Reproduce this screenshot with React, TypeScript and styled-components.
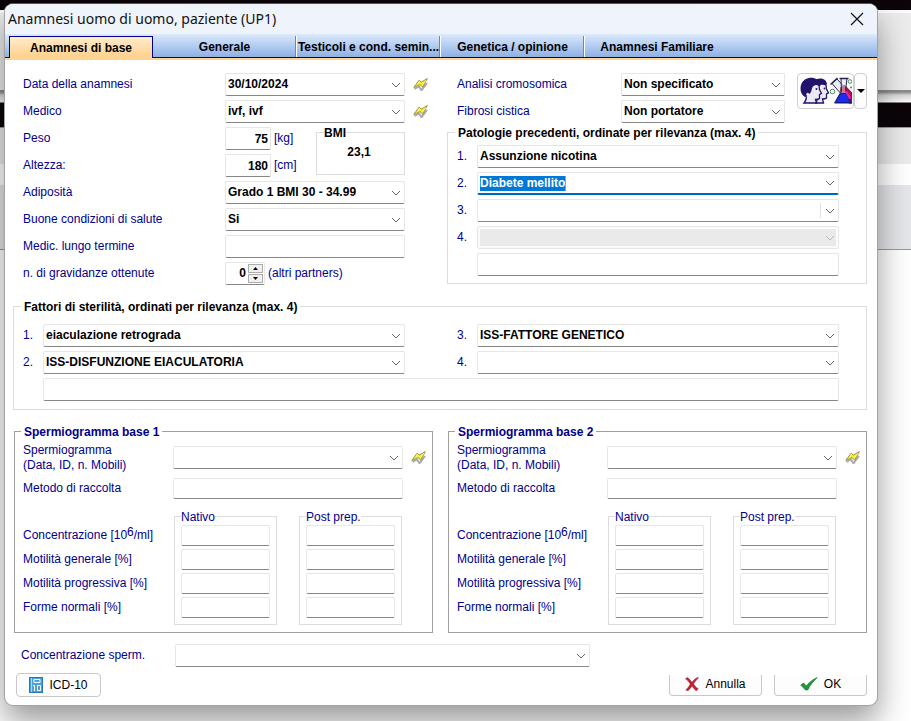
import React, { useId, useState } from "react";
import styled, { createGlobalStyle, css } from "styled-components";

const NAVY = "#00008b";

const GlobalStyle = createGlobalStyle`
  *, *::before, *::after { box-sizing: border-box; }
  body {
    margin: 0;
    background: #fff;
    font: 12px/15px "Liberation Sans", Arial, sans-serif;
    color: #000;
  }
  button, input, select { font: inherit; color: inherit; }
`;

/* ---------- shell ---------- */

const Desktop = styled.div`
  min-height: 100vh;
  padding: 3px 33px 15px 4px;
  background: linear-gradient(
    #0b0509 0 10px,
    #fbfbfb 10px 13px,
    #ececec 13px 90px,
    #8c8c8c 90px 92px,
    #d8d4d6 95px,
    #fbfafa 102px,
    #0b0509 103px 127px,
    #9a9a9a 127px 128px,
    #ebebeb 128px 164px,
    #fff 164px 185px,
    #e5e6e9 185px 249px,
    #999 249px 250px,
    #fff 250px
  );
`;

const Dialog = styled.main`
  display: flex;
  flex-direction: column;
  min-width: 820px;
  border: 1px solid #a3a3a3;
  border-top-color: #555;
  border-radius: 9px;
  overflow: hidden;
  background: #fff;
  box-shadow: 0 16px 32px rgba(0, 0, 0, 0.4);
`;

const TitleBar = styled.header`
  display: flex;
  align-items: center;
  justify-content: space-between;
  height: 30px;
  padding: 0 13px 0 3px;
  background: linear-gradient(90deg, #eef4f9, #eff3fb);
`;

const Title = styled.h1`
  margin: 0;
  font: 400 14px/20px "Noto Sans", "Open Sans", sans-serif;
  color: #111;
`;

const CloseButton = styled.button`
  display: flex;
  padding: 0;
  border: 0;
  background: none;
`;

const Tabs = styled.div`
  display: flex;
  height: 26px;
  padding: 2px 0 0 4px;
  border-bottom: 2px solid #ffd493;
  background: linear-gradient(#dbeafc, #8eb0e6 23px, ${NAVY} 23px);
`;

const Tab = styled.button<{ $active?: boolean; $last?: boolean }>`
  display: flex;
  justify-content: center;
  align-items: center;
  width: 144px;
  height: 21px;
  margin: 0;
  padding: 2px 0 0;
  border: 0;
  background: none;
  font-weight: 700;
  white-space: nowrap;
  ${(p) =>
    p.$active
      ? css`
          height: 22px;
          border: 1px solid ${NAVY};
          border-bottom: 0;
          background: linear-gradient(#ffeccb, #ffd08a);
        `
      : !p.$last &&
        css`
          border-right: 1px solid #fff;
          box-shadow: inset -1px 0 #6387c9;
        `}
`;

const Content = styled.form`
  display: flex;
  flex-direction: column;
  padding: 13px 10px 8px 8px;
`;

const TwoColumns = styled.div`
  display: grid;
  grid-template-columns: 1fr 1fr;
  gap: 14px;
`;

const Stack = styled.div`
  display: flex;
  flex-direction: column;
  gap: 4px;
`;

/* ---------- rows and labels ---------- */

const Label = styled.label`
  color: ${NAVY};
  white-space: nowrap;
`;

const Note = styled.span`
  color: ${NAVY};
  white-space: nowrap;
`;

const Power = styled.sup`
  font-size: 12px;
  line-height: 0;
  vertical-align: 3px;
`;

const FormRow = styled.div`
  display: grid;
  grid-template-columns: 202px 1fr 28px;
  align-items: center;
  padding-left: 10px;
`;

const NumberedRow = styled.div`
  display: grid;
  grid-template-columns: 20px 1fr;
  align-items: center;
`;

const Indented = styled.div`
  display: grid;
  padding-left: 20px;
`;

const Inline = styled.div`
  display: flex;
  align-items: center;
  gap: 3px;
`;

/* ---------- fields ---------- */

const fieldFrame = css`
  width: 100%;
  min-width: 0;
  height: 23px;
  border: 1px solid #e6e6e6;
  border-bottom-color: #868686;
  border-radius: 2px;
  background: #fff;
`;

const TextField = styled.input<{ $width?: number; $low?: boolean }>`
  ${fieldFrame}
  margin: 0;
  padding: 0 2px;
  outline: 0;
  font-weight: 700;
  ${(p) => p.$width && css`width: ${p.$width}px; text-align: right;`}
  ${(p) => p.$low && css`height: 21px;`}
`;

type ComboState = "normal" | "focused" | "split" | "disabled";

const ComboFrame = styled.div<{ $state?: ComboState }>`
  ${fieldFrame}
  display: grid;
  grid-template-columns: 1fr 18px;
  align-items: center;
  ${(p) =>
    p.$state === "focused" &&
    css`
      border-bottom: 2px solid #0067c0;
    `}
  ${(p) =>
    p.$state === "disabled" &&
    css`
      padding: 2px;
      grid-template-columns: 1fr 16px;
      border-bottom-color: #e6e6e6;
      background: #fbfbfb;
    `}
`;

const ComboSelect = styled.select`
  appearance: none;
  grid-area: 1 / 1 / 2 / 3;
  width: 100%;
  height: 19px;
  margin: 0;
  padding: 0 18px 1px 2px;
  border: 0;
  outline: 0;
  border-radius: 0;
  background: none;
  font-weight: 700;
  &:disabled {
    height: 17px;
    background: #eaeaea;
    opacity: 1;
  }
`;

const ComboInput = styled.input`
  grid-area: 1 / 1;
  justify-self: start;
  field-sizing: content;
  height: 15px;
  margin: 0 0 0 2px;
  padding: 0;
  border: 0;
  border-right: 1px solid #ff8728;
  outline: 0;
  background: #0078d7;
  color: #fff;
  font-weight: 700;
`;

const ComboArrow = styled.span<{ $split?: boolean; $muted?: boolean }>`
  grid-area: 1 / 2;
  display: flex;
  align-items: center;
  height: 15px;
  padding-left: 4px;
  color: ${(p) => (p.$muted ? "#b8b8b8" : "#666")};
  border-left: 1px solid ${(p) => (p.$split ? "#e2e2e2" : "transparent")};
  pointer-events: none;
`;

function Combo({ id, value = "", state = "normal", label }: { id?: string; value?: string; state?: ComboState; label?: string }) {
  const [text, setText] = useState(value);
  return (
    <ComboFrame $state={state}>
      {state === "focused" ? (
        <ComboInput id={id} value={text} onChange={(e) => setText(e.target.value)} />
      ) : (
        <ComboSelect id={id} aria-label={label} defaultValue={value} disabled={state === "disabled"}>
          <option value={value}>{value}</option>
        </ComboSelect>
      )}
      <ComboArrow $split={state === "split"} $muted={state === "disabled"}>
        <svg width="10" height="6" viewBox="0 0 10 6" fill="none" stroke="currentColor" aria-hidden>
          <path d="M1 1l4 4 4-4" />
        </svg>
      </ComboArrow>
    </ComboFrame>
  );
}

function NumberedCombo({ n, value, state }: { n: number; value?: string; state?: ComboState }) {
  const id = useId();
  return (
    <NumberedRow>
      <Label htmlFor={id}>{n}.</Label>
      <Combo id={id} value={value} state={state} />
    </NumberedRow>
  );
}

/* ---------- groups ---------- */

const Group = styled.fieldset<{ $top: number; $bottom: number }>`
  min-width: 0;
  margin: 0;
  padding: ${(p) => p.$top}px 27px ${(p) => p.$bottom}px 9px;
  border: 1px solid #dcdcdc;
`;

const FactorsGroup = styled(Group)`
  margin: 14px 0;
`;

const FactorColumns = styled.div`
  display: grid;
  grid-template-columns: 1fr 1fr;
  gap: 52px;
  margin-bottom: 4px;
`;

const SpermGroup = styled(Group)`
  margin-left: 1px;
  padding-left: 8px;
  padding-right: 0;
  border-color: #a0a0a0;
`;

const Legend = styled.legend<{ $navy?: boolean }>`
  height: 15px;
  margin-left: -2px;
  padding: 0 3px;
  line-height: 16px;
  font-weight: 700;
  white-space: nowrap;
  color: ${(p) => (p.$navy ? NAVY : "#000")};
`;

const Measures = styled.div`
  display: grid;
  grid-template-columns: 1fr 89px;
  padding-right: 28px;
`;

const MeasureRow = styled.div`
  display: grid;
  grid-template-columns: 202px 1fr;
  align-items: center;
  padding-left: 10px;
`;

const BmiBox = styled.fieldset`
  min-width: 0;
  height: 50px;
  margin: -2px 0 0;
  padding: 5px 7px 0;
  border: 1px solid #dcdcdc;
  font-weight: 700;
`;

const BmiLegend = styled.legend`
  padding: 0;
  line-height: 16px;
  height: 15px;
`;

const BmiValue = styled.output`
  display: block;
  padding-right: 3px;
  text-align: center;
`;

const SpinnerFrame = styled.div`
  ${fieldFrame}
  width: 40px;
  display: flex;
  align-items: center;
`;

const SpinnerInput = styled.input`
  width: 20px;
  min-width: 0;
  padding: 0;
  margin: 0 2px 0 0;
  border: 0;
  outline: 0;
  background: none;
  font-weight: 700;
  text-align: right;
`;

const SpinnerButtons = styled.div`
  display: flex;
  flex-direction: column;
  gap: 1px;
`;

const SpinnerButton = styled.button`
  display: flex;
  align-items: center;
  justify-content: center;
  width: 15px;
  height: 9px;
  padding: 0;
  border: 1px solid #adadad;
  background: #f0f0f0;
`;

const KaryotypeArea = styled.div`
  display: grid;
  grid-template-columns: 1fr 70px;
  gap: 12px;
  padding-left: 10px;
  margin-bottom: 2px;
`;

const KaryotypeRow = styled.div`
  display: grid;
  grid-template-columns: 1fr 1fr;
  align-items: center;
`;

const SplitButton = styled.div`
  display: flex;
  height: 36px;
`;

const PictureButton = styled.button`
  display: flex;
  align-items: center;
  justify-content: center;
  flex: 1;
  padding: 0;
  border: 1px solid #cfcfcf;
  border-radius: 4px;
  background: #fdfdfd;
`;

const ArrowButton = styled(PictureButton)`
  flex: 0 0 13px;
`;

const LightningButton = styled.button`
  display: flex;
  margin-left: 8px;
  padding: 0;
  border: 0;
  background: none;
`;

const SpermRow = styled.div`
  display: grid;
  grid-template-columns: 150px 1fr 29px;
  align-items: center;
`;

const TallLabel = styled(Label)`
  padding-top: 1px;
`;

const SpermStack = styled.div`
  display: flex;
  flex-direction: column;
  gap: 5px;
`;

const ValuesArea = styled.div`
  display: grid;
  grid-template-columns: 150px 1fr;
  margin-top: 10px;
  padding-right: 29px;
`;

const ValueNames = styled.div`
  display: flex;
  flex-direction: column;
  gap: 3px;
  padding-top: 16px;
`;

const ValueName = styled.span`
  height: 21px;
  line-height: 21px;
  color: ${NAVY};
  white-space: nowrap;
`;

const ValueColumns = styled.div`
  display: grid;
  grid-template-columns: 1fr 1fr;
  gap: 22px;
  padding: 0 1px;
`;

const ValueGroup = styled.fieldset`
  display: flex;
  flex-direction: column;
  gap: 3px;
  min-width: 0;
  margin: 0;
  padding: 1px 6px 6px;
  border: 1px solid #dcdcdc;
`;

const ValueLegend = styled.legend`
  height: 15px;
  padding: 0;
  line-height: 16px;
  color: ${NAVY};
`;

const BottomRow = styled.div`
  display: grid;
  grid-template-columns: 154px 415px;
  align-items: center;
  margin: 11px 0 6px;
  padding-left: 8px;
`;

const Footer = styled.footer`
  display: flex;
  align-items: flex-end;
  gap: 12px;
  padding-left: 3px;
`;

const PushButton = styled.button<{ $cut?: boolean }>`
  display: flex;
  align-items: center;
  justify-content: center;
  gap: 6px;
  min-width: ${(p) => (p.$cut ? 93 : 85)}px;
  height: 24px;
  padding: 0 6px;
  border: 1px solid #c8c8c8;
  border-radius: 4px;
  background: #fdfdfd;
  ${(p) =>
    p.$cut &&
    css`
      height: 21px;
      margin-bottom: 1px;
      padding-bottom: 2px;
      border-top: 0;
      border-radius: 0 0 4px 4px;
    `}
`;

const Spacer = styled.div`
  flex: 1;
`;

/* ---------- icons ---------- */

function Lightning() {
  return (
    <LightningButton type="button" aria-label="Aggiorna">
      <svg width="16" height="13" viewBox="0 0 16 13" aria-hidden>
        <path d="M1.500 11L6 8.500l2.500 3.800L14 5" fill="none" stroke="#a9a9b0" strokeWidth="2" />
        <path d="M.8 9.500L6 2.200 8.300 4 14.300.6 9.800 9.200 7 6.600z" fill="#f6ec2c" stroke="#716b23" strokeWidth=".7" />
        <path d="M6.500 2.800L5 6.200M13 2L9.500 6.500" stroke="#fffcb0" strokeWidth=".8" />
      </svg>
    </LightningButton>
  );
}

function PeopleAndFlasks() {
  return (
    <svg width="52" height="28" viewBox="0 0 52 28" aria-hidden>
      {/* far head */}
      <path d="M15 4C18 0 26 1 27 7l-2 2-3-2-4 3z" fill="#24126c" />
      <path d="M16 26c2-3 1-6 0-8l1-7c2-4 6-5 9-3l.5 4 2 4-2 1v4c-1 1-3 1-4 1l1 4z" fill="#ebe9f2" stroke="#24126c" strokeWidth="1.300" />
      {/* near head */}
      <path d="M5 20C-1 17-1 6 5 2.500 11-1 19 1 20.500 8L18 11 9 17z" fill="#24126c" />
      <path d="M4 26c2.500-3 3-6 1.500-9 1-3 3-2 4-1 2-2 1-5 3-7 2-2 5-2 6.500-.5l.5 4 2 4-2 1v4c-1 1-3 1-4 1l1 3.500z" fill="#ebe9f2" stroke="#24126c" strokeWidth="1.300" />
      <circle cx="16.500" cy="12" r="1" fill="#24126c" />
      <circle cx="24.500" cy="11.500" r=".9" fill="#24126c" />
      {/* tilted tube */}
      <path d="M32 6.500L37 2l15 16v8h-3z" fill="#e9eaf6" stroke="#25254d" />
      <path d="M41 10l4-1.500L52 16v10h-3L40.500 14z" fill="#b30e30" stroke="#3a0e28" strokeWidth=".7" />
      <path d="M30.500 7.500L37.500 1" stroke="#25254d" strokeWidth="1.500" />
      {/* conical flask */}
      <path d="M41 1.500h6L45.500 13 51 26H34.500L41.500 14z" fill="#dfe4fa" fillOpacity=".5" stroke="#25254d" />
      <path d="M40.500 16.500h6L50.500 25.500h-15z" fill="#1b2df0" stroke="#111a82" />
      <path d="M44.500 13.500l3 1 4 6.500-2.500 1z" fill="#e61cc8" />
      <path d="M39.500 1.500h9" stroke="#25254d" strokeWidth="1.500" />
      <circle cx="32.500" cy="14.500" r="2.300" fill="#fff" stroke="#4d8a5c" />
      <circle cx="50" cy="4.500" r="1.800" fill="#fff" stroke="#4d8a5c" />
      <circle cx="51" cy="10.500" r="1" fill="#4d8a5c" />
    </svg>
  );
}

function BookIcon() {
  return (
    <svg width="14" height="16" viewBox="0 0 14 16" aria-hidden>
      <rect x=".5" y=".5" width="13" height="15" fill="#4ba3dc" stroke="#2b73ad" />
      <path d="M2.500 1v14" stroke="#a9d5f2" />
      <path d="M5 2.500h6v3H5z" fill="#4ba3dc" stroke="#fff" />
      <path d="M4 8.500h1.500V14M8.500 8.500h3v5h-3z" fill="none" stroke="#fff" />
    </svg>
  );
}

function CrossIcon() {
  return (
    <svg width="14" height="14" viewBox="0 0 14 14" aria-hidden>
      <path d="M.5 1.800L2.500.5C4 1.500 5.500 3.500 7 5.300 8.500 3 11 1 12.800.4L13.500 1C11.500 2.500 9.800 4.800 8.500 7c1.500 2 3 4 4.800 5l-2 1.800C9.500 12.500 8.200 10.800 7 9c-1.500 2-2.500 3.500-4 4.700L.8 13C2.500 11.500 4 9.500 5.300 7 4 5 2.500 3 .5 1.800z" fill="#c8202f" stroke="#8f1222" strokeWidth=".5" />
    </svg>
  );
}

function CheckIcon() {
  return (
    <svg width="18" height="14" viewBox="0 0 18 14" aria-hidden>
      <path d="M.7 8l2.800-2 3 3C9 5.500 13 2 17.300.6 13.500 4 10 8.500 7.800 13H5.500z" fill="#1f9a38" stroke="#14702a" strokeWidth=".6" />
    </svg>
  );
}

function Triangle({ up }: { up?: boolean }) {
  return (
    <svg width="5" height="3" viewBox="0 0 5 3" aria-hidden>
      <path d={up ? "M0 3h5L2.500 0z" : "M0 0h5L2.500 3z"} />
    </svg>
  );
}

/* ---------- sections ---------- */

function ComboRow({ label, value, lightning }: { label: string; value: string; lightning?: boolean }) {
  const id = useId();
  return (
    <FormRow>
      <Label htmlFor={id}>{label}</Label>
      <Combo id={id} value={value} />
      {lightning && <Lightning />}
    </FormRow>
  );
}

function Measure({ label, value, unit }: { label: string; value: string; unit: string }) {
  const id = useId();
  return (
    <MeasureRow>
      <Label htmlFor={id}>{label}</Label>
      <Inline>
        <TextField id={id} $width={46} defaultValue={value} />
        <Note>{unit}</Note>
      </Inline>
    </MeasureRow>
  );
}

function Karyotype({ label, value }: { label: string; value: string }) {
  const id = useId();
  return (
    <KaryotypeRow>
      <Label htmlFor={id}>{label}</Label>
      <Combo id={id} value={value} />
    </KaryotypeRow>
  );
}

const VALUE_NAMES = ["Concentrazione", "Motilità generale [%]", "Motilità progressiva [%]", "Forme normali [%]"];

function Spermiogram({ title }: { title: string }) {
  const id = useId();
  return (
    <SpermGroup $top={3} $bottom={7}>
      <Legend $navy>{title}</Legend>
      <SpermStack>
        <SpermRow>
          <TallLabel htmlFor={id + "s"}>
            Spermiogramma
            <br />
            (Data, ID, n. Mobili)
          </TallLabel>
          <Combo id={id + "s"} />
          <Lightning />
        </SpermRow>
        <SpermRow>
          <Label htmlFor={id + "m"}>Metodo di raccolta</Label>
          <TextField id={id + "m"} $low />
        </SpermRow>
      </SpermStack>
      <ValuesArea>
        <ValueNames>
          {VALUE_NAMES.map((name, i) => (
            <ValueName key={name}>
              {name}
              {i === 0 && (
                <>
                  {" [10"}
                  <Power>6</Power>/ml]
                </>
              )}
            </ValueName>
          ))}
        </ValueNames>
        <ValueColumns>
          {["Nativo", "Post prep."].map((column) => (
            <ValueGroup key={column}>
              <ValueLegend>{column}</ValueLegend>
              {VALUE_NAMES.map((name) => (
                <TextField key={name} $low aria-label={`${name}, ${column}`} />
              ))}
            </ValueGroup>
          ))}
        </ValueColumns>
      </ValuesArea>
    </SpermGroup>
  );
}

const TABS = ["Anamnesi di base", "Generale", "Testicoli e cond. semin...", "Genetica / opinione", "Anamnesi Familiare"];

export default function App() {
  return (
    <Desktop>
      <GlobalStyle />
      <Dialog>
        <TitleBar>
          <Title>Anamnesi uomo di uomo, paziente (UP1)</Title>
          <CloseButton type="button" aria-label="Chiudi">
            <svg width="14" height="14" viewBox="0 0 14 14" stroke="#111" strokeWidth="1.200" aria-hidden>
              <path d="M1 1l12 12M13 1L1 13" />
            </svg>
          </CloseButton>
        </TitleBar>
        <Tabs role="tablist">
          {TABS.map((tab, i) => (
            <Tab key={tab} type="button" role="tab" aria-selected={i === 0} $active={i === 0} $last={i === TABS.length - 1}>
              {tab}
            </Tab>
          ))}
        </Tabs>
        <Content onSubmit={(e) => e.preventDefault()}>
          <TwoColumns>
            <Stack>
              <ComboRow label="Data della anamnesi" value="30/10/2024" lightning />
              <ComboRow label="Medico" value="ivf, ivf" lightning />
              <Measures>
                <Stack>
                  <Measure label="Peso" value="75" unit="[kg]" />
                  <Measure label="Altezza:" value="180" unit="[cm]" />
                </Stack>
                <BmiBox>
                  <BmiLegend>BMI</BmiLegend>
                  <BmiValue>23,1</BmiValue>
                </BmiBox>
              </Measures>
              <ComboRow label="Adiposità" value="Grado 1 BMI 30 - 34.99" />
              <ComboRow label="Buone condizioni di salute" value="Si" />
              <FormRow>
                <Label htmlFor="medic">Medic. lungo termine</Label>
                <TextField id="medic" />
              </FormRow>
              <FormRow>
                <Label htmlFor="gravidanze">n. di gravidanze ottenute</Label>
                <Inline>
                  <SpinnerFrame>
                    <SpinnerInput id="gravidanze" defaultValue="0" />
                    <SpinnerButtons>
                      <SpinnerButton type="button" aria-label="Aumenta">
                        <Triangle up />
                      </SpinnerButton>
                      <SpinnerButton type="button" aria-label="Diminuisci">
                        <Triangle />
                      </SpinnerButton>
                    </SpinnerButtons>
                  </SpinnerFrame>
                  <Note>(altri partners)</Note>
                </Inline>
              </FormRow>
            </Stack>
            <div>
              <KaryotypeArea>
                <Stack>
                  <Karyotype label="Analisi cromosomica" value="Non specificato" />
                  <Karyotype label="Fibrosi cistica" value="Non portatore" />
                </Stack>
                <SplitButton>
                  <PictureButton type="button" aria-label="Genetica">
                    <PeopleAndFlasks />
                  </PictureButton>
                  <ArrowButton type="button" aria-label="Altre opzioni">
                    <svg width="8" height="4" viewBox="0 0 8 4" aria-hidden>
                      <path d="M0 0h8L4 4z" />
                    </svg>
                  </ArrowButton>
                </SplitButton>
              </KaryotypeArea>
              <Group $top={5} $bottom={7}>
                <Legend>Patologie precedenti, ordinate per rilevanza (max. 4)</Legend>
                <Stack>
                  <NumberedCombo n={1} value="Assunzione nicotina" />
                  <NumberedCombo n={2} value="Diabete mellito" state="focused" />
                  <NumberedCombo n={3} state="split" />
                  <NumberedCombo n={4} state="disabled" />
                  <Indented>
                    <TextField aria-label="Note sulle patologie" />
                  </Indented>
                </Stack>
              </Group>
            </div>
          </TwoColumns>

          <FactorsGroup $top={10} $bottom={8}>
            <Legend>Fattori di sterilità, ordinati per rilevanza (max. 4)</Legend>
            <FactorColumns>
              <Stack>
                <NumberedCombo n={1} value="eiaculazione retrograda" />
                <NumberedCombo n={2} value="ISS-DISFUNZIONE EIACULATORIA" />
              </Stack>
              <Stack>
                <NumberedCombo n={3} value="ISS-FATTORE GENETICO" />
                <NumberedCombo n={4} />
              </Stack>
            </FactorColumns>
            <Indented>
              <TextField aria-label="Note sui fattori di sterilità" />
            </Indented>
          </FactorsGroup>

          <TwoColumns>
            <Spermiogram title="Spermiogramma base 1" />
            <Spermiogram title="Spermiogramma base 2" />
          </TwoColumns>

          <BottomRow>
            <Label htmlFor="concentrazione">Concentrazione sperm.</Label>
            <Combo id="concentrazione" />
          </BottomRow>
          <Footer>
            <PushButton type="button">
              <BookIcon />
              ICD-10
            </PushButton>
            <Spacer />
            <PushButton type="button" $cut>
              <CrossIcon />
              Annulla
            </PushButton>
            <PushButton type="submit" $cut>
              <CheckIcon />
              OK
            </PushButton>
          </Footer>
        </Content>
      </Dialog>
    </Desktop>
  );
}
